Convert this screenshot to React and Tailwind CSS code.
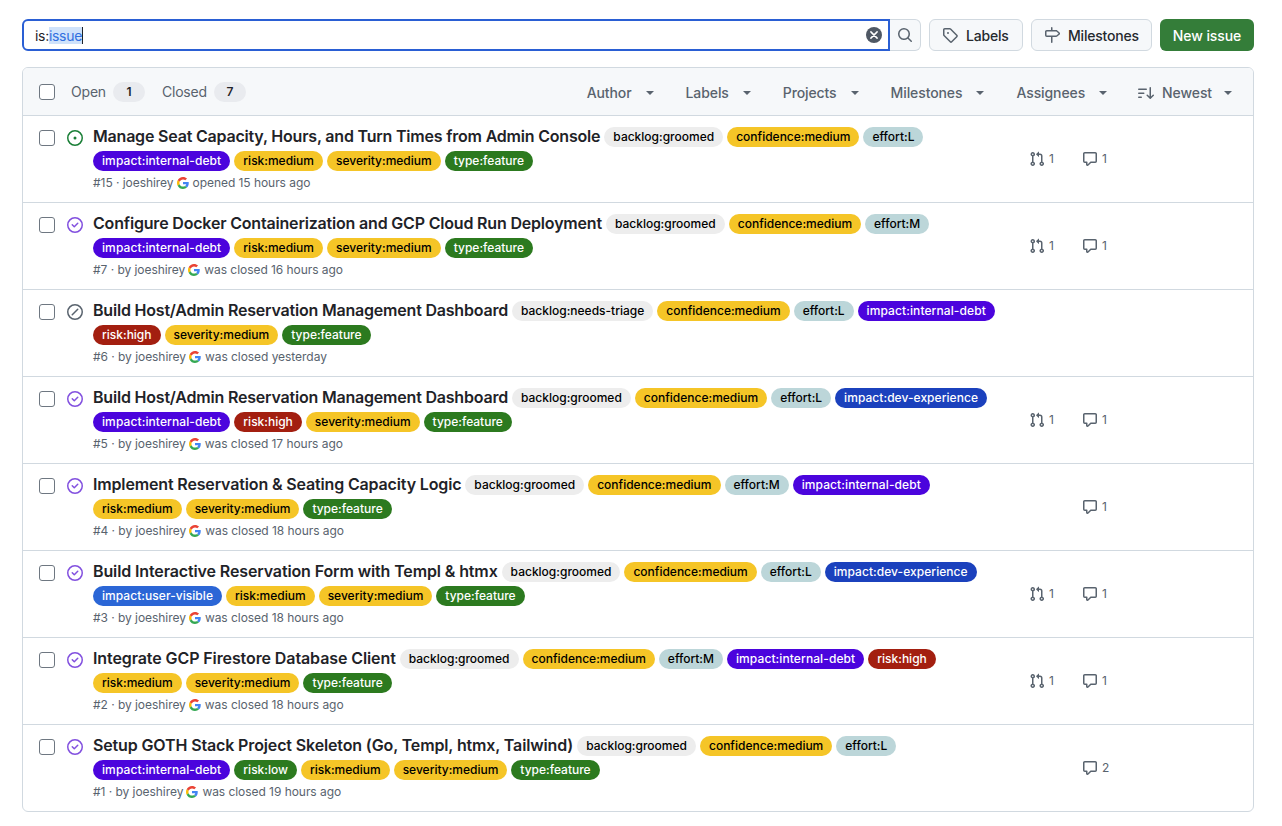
import { useState } from 'react'

const ICONS = {
  tag: 'M1 7.775V2.75C1 1.784 1.784 1 2.75 1h5.025c.464 0 .91.184 1.238.513l6.25 6.25a1.75 1.75 0 0 1 0 2.474l-5.026 5.026a1.75 1.75 0 0 1-2.474 0l-6.25-6.25A1.75 1.75 0 0 1 1 7.775Zm1.5 0c0 .066.026.13.073.177l6.25 6.25a.25.25 0 0 0 .354 0l5.025-5.025a.25.25 0 0 0 0-.354l-6.25-6.25a.25.25 0 0 0-.177-.073H2.75a.25.25 0 0 0-.25.25ZM6 5a1 1 0 1 1 0 2 1 1 0 0 1 0-2Z',
  milestone: 'M7.75 0a.75.75 0 0 1 .75.75V3h3.634c.414 0 .814.147 1.13.414l2.07 1.75a1.75 1.75 0 0 1 0 2.672l-2.07 1.75a1.75 1.75 0 0 1-1.13.414H8.5v5.25a.75.75 0 0 1-1.5 0V10H2.75A1.75 1.75 0 0 1 1 8.25v-3.5C1 3.784 1.784 3 2.75 3H7V.75A.75.75 0 0 1 7.75 0Zm4.384 8.5a.25.25 0 0 0 .161-.06l2.07-1.75a.25.25 0 0 0 0-.38l-2.07-1.75a.25.25 0 0 0-.161-.06H2.75a.25.25 0 0 0-.25.25v3.5c0 .138.112.25.25.25h9.384Z',
  search: 'M10.68 11.74a6 6 0 0 1-7.922-8.982 6 6 0 0 1 8.982 7.922l3.04 3.04a.749.749 0 0 1-.326 1.275.749.749 0 0 1-.734-.215ZM11.5 7a4.499 4.499 0 1 0-8.997 0A4.499 4.499 0 0 0 11.5 7Z',
  pr: 'M1.5 3.25a2.25 2.25 0 1 1 3 2.122v5.256a2.251 2.251 0 1 1-1.5 0V5.372A2.25 2.25 0 0 1 1.5 3.25Zm5.677-.177L9.573.677A.25.25 0 0 1 10 .854V2.5h1A2.5 2.5 0 0 1 13.5 5v5.628a2.251 2.251 0 1 1-1.5 0V5a1 1 0 0 0-1-1h-1v1.646a.25.25 0 0 1-.427.177L7.177 3.427a.25.25 0 0 1 0-.354ZM3.75 2.5a.75.75 0 1 0 0 1.5.75.75 0 0 0 0-1.5Zm0 9.5a.75.75 0 1 0 0 1.5.75.75 0 0 0 0-1.5Zm8.25.75a.75.75 0 1 0 1.5 0 .75.75 0 0 0-1.5 0Z',
  comment: 'M1 2.75C1 1.784 1.784 1 2.75 1h10.5c.966 0 1.75.784 1.75 1.75v7.5A1.75 1.75 0 0 1 13.25 12H9.06l-2.573 2.573A1.458 1.458 0 0 1 4 13.543V12H2.75A1.75 1.75 0 0 1 1 10.25Zm1.75-.25a.25.25 0 0 0-.25.25v7.5c0 .138.112.25.25.25h2a.75.75 0 0 1 .75.75v2.19l2.72-2.72a.749.749 0 0 1 .53-.22h4.5a.25.25 0 0 0 .25-.25v-7.5a.25.25 0 0 0-.25-.25Z',
  open: 'M8 9.5a1.5 1.5 0 1 0 0-3 1.5 1.5 0 0 0 0 3ZM8 0a8 8 0 1 1 0 16A8 8 0 0 1 8 0ZM1.5 8a6.5 6.5 0 1 0 13 0 6.5 6.5 0 0 0-13 0Z',
  closed: 'M11.28 6.78a.75.75 0 0 0-1.06-1.06L7.25 8.69 5.78 7.22a.75.75 0 0 0-1.06 1.06l2 2a.75.75 0 0 0 1.06 0l3.5-3.5ZM16 8A8 8 0 1 1 0 8a8 8 0 0 1 16 0Zm-1.5 0a6.5 6.5 0 1 0-13 0 6.5 6.5 0 0 0 13 0Z',
  skipped: 'M8 0a8 8 0 1 1 0 16A8 8 0 0 1 8 0ZM1.5 8a6.5 6.5 0 1 0 13 0 6.5 6.5 0 0 0-13 0Zm9.78-2.22-5.5 5.5a.749.749 0 0 1-1.275-.326.749.749 0 0 1 .215-.734l5.5-5.5a.751.751 0 0 1 1.042.018.751.751 0 0 1 .018 1.042Z',
  sort: 'M0 4.25a.75.75 0 0 1 .75-.75h7.5a.75.75 0 0 1 0 1.5H.75A.75.75 0 0 1 0 4.25Zm0 4a.75.75 0 0 1 .75-.75h5a.75.75 0 0 1 0 1.5h-5A.75.75 0 0 1 0 8.25Zm0 4a.75.75 0 0 1 .75-.75h2.5a.75.75 0 0 1 0 1.5H.75a.75.75 0 0 1-.75-.75ZM12.25 2a.75.75 0 0 1 .75.75v8.69l1.72-1.72a.75.75 0 1 1 1.06 1.06l-3 3a.75.75 0 0 1-1.06 0l-3-3a.75.75 0 1 1 1.06-1.06l1.72 1.72V2.75a.75.75 0 0 1 .75-.75Z',
}

function Icon({ name, className = '' }) {
  return (
    <svg viewBox="0 0 16 16" fill="currentColor" className={className}>
      <path fillRule="evenodd" d={ICONS[name]} />
    </svg>
  )
}

function GoogleIcon() {
  return (
    <svg viewBox="0 0 48 48" className="w-3 h-3 shrink-0 ml-[3px] mr-[4px]">
      <path fill="#EA4335" d="M24 9.5c3.5 0 6.7 1.2 9.2 3.6l6.9-6.9C35.9 2.4 30.500 0 24 0 14.600 0 6.500 5.400 2.600 13.200l8 6.200C12.500 13.600 17.800 9.500 24 9.500z" />
      <path fill="#4285F4" d="M46.980 24.550c0-1.570-.150-3.090-.380-4.550H24v9.020h12.940c-.580 2.960-2.260 5.480-4.780 7.180l7.730 6c4.510-4.180 7.090-10.360 7.090-17.650z" />
      <path fill="#FBBC05" d="M10.530 28.590c-.480-1.450-.760-2.990-.760-4.590s.270-3.140.760-4.590l-7.980-6.190C.920 16.460 0 20.120 0 24c0 3.880.920 7.540 2.560 10.780l7.970-6.190z" />
      <path fill="#34A853" d="M24 48c6.480 0 11.930-2.130 15.890-5.810l-7.730-6c-2.150 1.450-4.920 2.300-8.160 2.300-6.260 0-11.570-4.220-13.470-9.910l-7.980 6.190C6.510 42.620 14.620 48 24 48z" />
    </svg>
  )
}

const LABEL_STYLES = {
  'backlog:groomed': 'bg-[#ededed] text-black',
  'backlog:needs-triage': 'bg-[#ededed] text-black',
  'confidence:medium': 'bg-[#f5c527] text-black',
  'risk:medium': 'bg-[#f5c527] text-black',
  'severity:medium': 'bg-[#f5c527] text-black',
  'effort:L': 'bg-[#bcd6d9] text-black',
  'effort:M': 'bg-[#bcd6d9] text-black',
  'impact:internal-debt': 'bg-[#4b04dd] text-white tracking-[0.1px]',
  'impact:dev-experience': 'bg-[#1b41bd] text-white tracking-[0.05px]',
  'impact:user-visible': 'bg-[#2b66d6] text-white tracking-[0.05px]',
  'type:feature': 'bg-[#2c7a1f] text-white',
  'risk:low': 'bg-[#2c7a1f] text-white',
  'risk:high': 'bg-[#a31f10] text-white',
}

// track: title letter spacing, tuned per title to the original's text widths
const ISSUES = [
  { title: 'Manage Seat Capacity, Hours, and Turn Times from Admin Console', track: 'tracking-[-0.2px]', state: 'open', num: 15, before: 'joeshirey', after: 'opened 15 hours ago', by: false, pr: 1, comments: 1,
    labels: ['backlog:groomed', 'confidence:medium', 'effort:L', 'impact:internal-debt', 'risk:medium', 'severity:medium', 'type:feature'] },
  { title: 'Configure Docker Containerization and GCP Cloud Run Deployment', track: 'tracking-[-0.185px]', state: 'closed', num: 7, before: 'joeshirey', after: 'was closed 16 hours ago', by: true, pr: 1, comments: 1,
    labels: ['backlog:groomed', 'confidence:medium', 'effort:M', 'impact:internal-debt', 'risk:medium', 'severity:medium', 'type:feature'] },
  { title: 'Build Host/Admin Reservation Management Dashboard', track: 'tracking-[-0.2px]', state: 'skipped', num: 6, before: 'joeshirey', after: 'was closed yesterday', by: true,
    labels: ['backlog:needs-triage', 'confidence:medium', 'effort:L', 'impact:internal-debt', 'risk:high', 'severity:medium', 'type:feature'] },
  { title: 'Build Host/Admin Reservation Management Dashboard', track: 'tracking-[-0.2px]', state: 'closed', num: 5, before: 'joeshirey', after: 'was closed 17 hours ago', by: true, pr: 1, comments: 1,
    labels: ['backlog:groomed', 'confidence:medium', 'effort:L', 'impact:dev-experience', 'impact:internal-debt', 'risk:high', 'severity:medium', 'type:feature'] },
  { title: 'Implement Reservation & Seating Capacity Logic', track: 'tracking-[-0.15px]', state: 'closed', num: 4, before: 'joeshirey', after: 'was closed 18 hours ago', by: true, comments: 1,
    labels: ['backlog:groomed', 'confidence:medium', 'effort:M', 'impact:internal-debt', 'risk:medium', 'severity:medium', 'type:feature'] },
  { title: 'Build Interactive Reservation Form with Templ & htmx', track: 'tracking-[-0.125px]', state: 'closed', num: 3, before: 'joeshirey', after: 'was closed 18 hours ago', by: true, pr: 1, comments: 1,
    labels: ['backlog:groomed', 'confidence:medium', 'effort:L', 'impact:dev-experience', 'impact:user-visible', 'risk:medium', 'severity:medium', 'type:feature'] },
  { title: 'Integrate GCP Firestore Database Client', track: 'tracking-[-0.1px]', state: 'closed', num: 2, before: 'joeshirey', after: 'was closed 18 hours ago', by: true, pr: 1, comments: 1,
    labels: ['backlog:groomed', 'confidence:medium', 'effort:M', 'impact:internal-debt', 'risk:high', 'risk:medium', 'severity:medium', 'type:feature'] },
  { title: 'Setup GOTH Stack Project Skeleton (Go, Templ, htmx, Tailwind)', track: 'tracking-[-0.135px]', state: 'closed', num: 1, before: 'joeshirey', after: 'was closed 19 hours ago', by: true, comments: 2,
    labels: ['backlog:groomed', 'confidence:medium', 'effort:L', 'impact:internal-debt', 'risk:low', 'risk:medium', 'severity:medium', 'type:feature'] },
]

const STATE_COLOR = {
  open: 'text-[#1a7f37]',
  closed: 'text-[#8250df]',
  skipped: 'text-[#59636e]',
}

function Checkbox() {
  return <span className="block w-4 h-4 shrink-0 rounded-[3px] border border-[#6e7781] bg-white" />
}

function Caret({ className = '' }) {
  return <span className={`w-0 h-0 border-x-[4px] border-x-transparent border-t-[4px] border-t-[#59636e] ${className}`} />
}

function Filter({ label }) {
  return (
    <span className="flex items-center text-sm font-medium tracking-[-0.1px] text-[#59636e]">
      {label}
      <Caret className="ml-[14px]" />
    </span>
  )
}

function Counter({ value }) {
  return (
    <span className="flex items-center justify-center w-8 h-5 rounded-full bg-[#e9ebef] text-xs font-semibold text-[#1f2328]">
      {value}
    </span>
  )
}

function Button({ icon, label, className = '' }) {
  return (
    <button className={`flex items-center gap-2 h-8 px-3 rounded-md border border-[#d1d9e0] bg-[#f6f8fa] text-sm font-medium tracking-[-0.2px] text-[#25292e] ${className}`}>
      <Icon name={icon} className="w-4 h-4 text-[#59636e]" />
      <span className="pt-px">{label}</span>
    </button>
  )
}

function IssueRow({ issue }) {
  return (
    <div className="flex items-center h-[87px] pl-4 border-t border-[#d1d9e0]">
      <div className="flex self-start pt-[14px]">
        <Checkbox />
        <Icon name={issue.state} className={`w-4 h-4 ml-3 ${STATE_COLOR[issue.state]}`} />
      </div>
      <div className="w-[915px] ml-[10px] self-start pt-[11px]">
        <div className="flex flex-wrap items-start gap-1">
          <span className={`text-base leading-[18px] font-semibold text-[#1f2328] ${issue.track}`}>{issue.title}</span>
          {issue.labels.map((l) => (
            <span key={l} className={`h-5 px-[9px] rounded-full text-xs leading-5 font-medium ${LABEL_STYLES[l]}`}>{l}</span>
          ))}
        </div>
        <div className="flex items-center h-[18px] mt-[3px] text-xs tracking-[-0.05px] text-[#59636e]">
          <span>#{issue.num} · {issue.by ? 'by ' : ''}{issue.before}</span>
          <GoogleIcon />
          <span>{issue.after}</span>
        </div>
      </div>
      <div className="flex items-center ml-[21px] text-xs text-[#59636e]">
        <span className="flex items-center gap-[4px] w-[53px]">
          {issue.pr && (<><Icon name="pr" className="w-4 h-4" />{issue.pr}</>)}
        </span>
        <span className="flex items-center gap-[4px]">
          {issue.comments && (<><Icon name="comment" className="w-4 h-4" />{issue.comments}</>)}
        </span>
      </div>
    </div>
  )
}

export default function App() {
  const [query] = useState('is:')

  return (
    <div className="min-h-[826px] bg-white pl-[22px] pr-[28px] pt-[19px] font-['Inter','Liberation_Sans',sans-serif] antialiased">
      {/* search + actions */}
      <div className="flex items-center">
        <div className="flex items-center w-[868px] h-8 pl-[11px] pr-[6px] rounded-l-md border-2 border-[#2a5fd4] bg-white">
          <span className="mt-px text-sm leading-[17px] tracking-[-0.3px] text-[#1f2328]">{query}</span>
          <span className="mt-px text-sm leading-[17px] tracking-[-0.3px] text-[#2f6fe0] bg-[#cfe2fb] border-r border-[#1f2328]">issue</span>
          <span className="ml-auto flex items-center justify-center w-4 h-4 rounded-full bg-[#4f5864] text-white">
            <svg viewBox="0 0 16 16" className="w-[10px] h-[10px]" stroke="currentColor" strokeWidth="2.4" strokeLinecap="round">
              <path d="M3 3l10 10M13 3L3 13" />
            </svg>
          </span>
        </div>
        <button className="flex items-center justify-center w-[31px] h-8 rounded-r-md border border-l-0 border-[#d1d9e0] bg-[#f6f8fa]">
          <Icon name="search" className="w-4 h-4 text-[#59636e]" />
        </button>
        <div className="ml-2"><Button icon="tag" label="Labels" className="w-[94px]" /></div>
        <div className="ml-2"><Button icon="milestone" label="Milestones" className="w-[121px]" /></div>
        <button className="ml-2 h-8 w-[94px] pt-px rounded-md bg-[#347d39] text-sm font-medium tracking-[-0.1px] text-white">New issue</button>
      </div>

      {/* list */}
      <div className="mt-4 rounded-md border border-[#d1d9e0] overflow-hidden">
        <div className="flex items-center h-[47px] pl-4 pr-[21px] bg-[#f6f8fa]">
          <Checkbox />
          <span className="ml-4 text-sm tracking-[-0.2px] text-[#59636e]">Open</span>
          <span className="ml-[7px]"><Counter value="1" /></span>
          <span className="ml-[17px] text-sm tracking-[-0.2px] text-[#59636e]">Closed</span>
          <span className="ml-[7px]"><Counter value="7" /></span>
          <div className="ml-auto flex items-center gap-[32px] pt-[2px]">
            <Filter label="Author" />
            <Filter label="Labels" />
            <Filter label="Projects" />
            <Filter label="Milestones" />
            <Filter label="Assignees" />
            <span className="-ml-px flex items-center text-sm font-medium tracking-[-0.1px] text-[#59636e]">
              <Icon name="sort" className="w-4 h-4 mr-2" />
              Newest
              <Caret className="ml-[12px]" />
            </span>
          </div>
        </div>
        {ISSUES.map((issue) => <IssueRow key={issue.num} issue={issue} />)}
      </div>
    </div>
  )
}
